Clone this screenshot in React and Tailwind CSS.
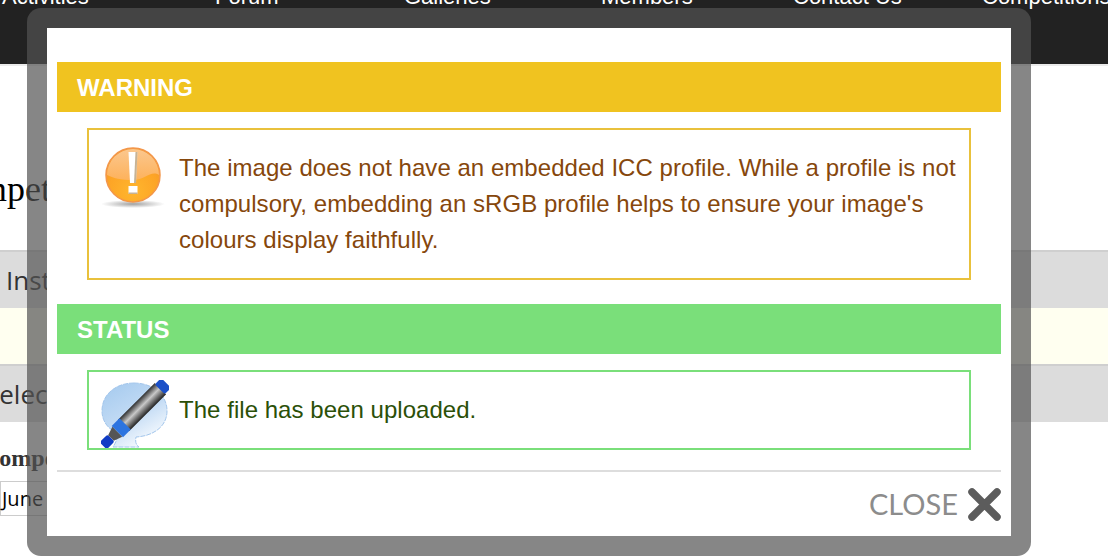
const NAV = [
  { label: 'Activities', width: 'w-[213px]', caret: true },
  { label: 'Forum', width: 'w-[189px]', caret: true },
  { label: 'Galleries', width: 'w-[197px]', caret: true },
  { label: 'Members', width: 'w-[192px]', caret: true },
  { label: 'Contact Us', width: 'w-[189px]', caret: true },
  { label: 'Competitions', width: 'w-[200px]', caret: false },
];

function WarningIcon() {
  return (
    <svg width="64" height="64" viewBox="0 0 64 64" className="shrink-0 self-start mt-4">
      <defs>
        <radialGradient id="warnBody" cx="50%" cy="80%" r="65%">
          <stop offset="0%" stopColor="#ffb62e" />
          <stop offset="70%" stopColor="#fda526" />
          <stop offset="100%" stopColor="#f59a2a" />
        </radialGradient>
        <linearGradient id="warnGloss" x1="0" y1="0" x2="0" y2="1">
          <stop offset="0%" stopColor="#fbc78e" />
          <stop offset="100%" stopColor="#fdb25c" />
        </linearGradient>
        <radialGradient id="warnShadow" cx="50%" cy="50%" r="50%">
          <stop offset="0%" stopColor="#8a8a8a" stopOpacity="0.8" />
          <stop offset="100%" stopColor="#8a8a8a" stopOpacity="0" />
        </radialGradient>
      </defs>
      <ellipse cx="32" cy="58" rx="32" ry="4" fill="url(#warnShadow)" />
      <circle cx="32" cy="29" r="27" fill="url(#warnBody)" stroke="#f3964a" strokeWidth="1.5" />
      <path d="M6 29a26 26 0 0 1 52 0c-8-5-14 5-26 5S12 32 6 29z" fill="url(#warnGloss)" />
      <path d="M27.5 6h9l-1.5 31h-6z" fill="#fff" />
      <path d="M36.5 6L35 37h-2l1.5-31z" fill="#a08050" opacity="0.6" />
      <rect x="27.5" y="40" width="9" height="8" fill="#fff" />
      <path d="M27.5 48h9v-1.5h-9z" fill="#a08050" opacity="0.6" />
    </svg>
  );
}

function PenIcon() {
  return (
    <svg width="68" height="68" viewBox="0 0 68 68" className="shrink-0 self-end">
      <defs>
        <linearGradient id="bubbleFill" x1="0" y1="0" x2="0.6" y2="1">
          <stop offset="0%" stopColor="#a3c9ee" />
          <stop offset="60%" stopColor="#c4dcf5" />
          <stop offset="100%" stopColor="#f6fafe" />
        </linearGradient>
        <linearGradient id="penBody" x1="0" y1="0" x2="1" y2="0">
          <stop offset="0%" stopColor="#2e2e2e" />
          <stop offset="45%" stopColor="#c8c8c8" />
          <stop offset="100%" stopColor="#222222" />
        </linearGradient>
      </defs>
      <path
        d="M33 3C15 3 1 14 1 31c0 10 6 18 15 22 1 5-1 9-4 14h26c-3-2-4-5-3-10 18-1 31-11 31-26C66 14 51 3 33 3z"
        fill="url(#bubbleFill)"
        stroke="#a3c6ec"
        strokeWidth="1"
        strokeDasharray="5 1"
      />
      <g transform="rotate(45 34 34)">
        <rect x="26" y="-2" width="16" height="52" fill="url(#penBody)" />
        <rect x="27" y="-10" width="14" height="9" rx="2" fill="#1b50c8" />
        <rect x="26" y="48" width="16" height="11" fill="#2c74e0" />
        <path d="M27 59h14l-3 9h-8z" fill="#555" />
        <rect x="29" y="68" width="10" height="11" rx="2" fill="#0f3cc4" />
      </g>
    </svg>
  );
}

function Section({ title, head, box, text, icon, children }) {
  return (
    <section>
      <h2 className={`h-[50px] pl-5 pt-px flex items-center text-white text-[24px] font-bold ${head}`}>{title}</h2>
      <div className={`mx-[30px] mt-4 border-2 flex items-center ${box}`}>
        {icon}
        <p className={`text-[24px] leading-9 tracking-[0.04px] ${text}`}>{children}</p>
      </div>
    </section>
  );
}

export default function App() {
  return (
    <div className="relative h-[556px] w-[1108px] overflow-hidden bg-white font-['Liberation_Sans',sans-serif]">
      {/* page behind the dialog */}
      <header className="h-[66px] overflow-hidden bg-[#222222] border-b-2 border-[#ebebeb]">
        <nav className="flex pl-[2px] -mt-[15px] text-white text-[22px] leading-6">
          {NAV.map(item => (
            <span key={item.label} className={`shrink-0 flex items-end gap-[9px] ${item.width}`}>
              {item.label}
              {item.caret && <span className="mb-[17px] w-[5px] h-[2px] bg-[#999]" />}
            </span>
          ))}
        </nav>
      </header>
      <h1 className="-ml-[63px] mt-[103px] text-[36px] leading-10 text-black font-['Liberation_Serif',serif] whitespace-nowrap">Competition Entry</h1>
      <div className="mt-[41px] h-[58px] bg-[#dcdcdc] border-t-2 border-[#cfcfcf] pl-[6px] flex items-center text-[26px] text-[#333] font-['Open_Sans',sans-serif]">Instructions</div>
      <div className="h-[56px] bg-[#fffff0]" />
      <div className="h-[58px] -indent-[15px] bg-[#dcdcdc] border-t-2 border-[#cfcfcf] flex items-center text-[26px] text-[#333] font-['Open_Sans',sans-serif]">Select</div>
      <div className="mt-6 -ml-[18px] text-[24px] leading-6 font-bold text-[#333] font-['Liberation_Serif',serif]">Competition</div>
      <div className="mt-[11px] h-[35px] w-[200px] border border-[#ccc] pl-[1px] flex items-center text-[20px] text-black font-['Open_Sans',sans-serif]">June</div>

      {/* dialog */}
      <div className="absolute left-[27px] top-2 w-[1004px] h-[548px] p-5 rounded-[14px] bg-[#525252]/70">
        <div className="h-full bg-white px-[10px] pt-[34px]">
          <Section
            title="WARNING"
            head="bg-[#f0c320]"
            box="border-[#e9c13c] h-[152px] pl-3 gap-[14px]"
            text="text-[#86470c]"
            icon={<WarningIcon />}
          >
            The image does not have an embedded ICC profile. While a profile is not compulsory, embedding an sRGB profile helps to ensure your image's colours display faithfully.
          </Section>
          <div className="h-6" />
          <Section
            title="STATUS"
            head="bg-[#7adf7a]"
            box="border-[#7adf7a] h-[80px] pl-3 gap-[10px]"
            text="text-[#2b5008]"
            icon={<PenIcon />}
          >
            The file has been uploaded.
          </Section>
          <div className="mt-5 border-t-2 border-[#dddddd] flex justify-end items-center gap-[10px] pt-[14px]">
            <span className="text-[29px] leading-9 text-[#8c8c8c] font-['Lato',sans-serif]">CLOSE</span>
            <svg width="33" height="33" viewBox="0 0 33 33">
              <path d="M4 4l25 25M29 4L4 29" stroke="#5c5c5c" strokeWidth="7.5" strokeLinecap="round" />
            </svg>
          </div>
        </div>
      </div>
    </div>
  );
}
